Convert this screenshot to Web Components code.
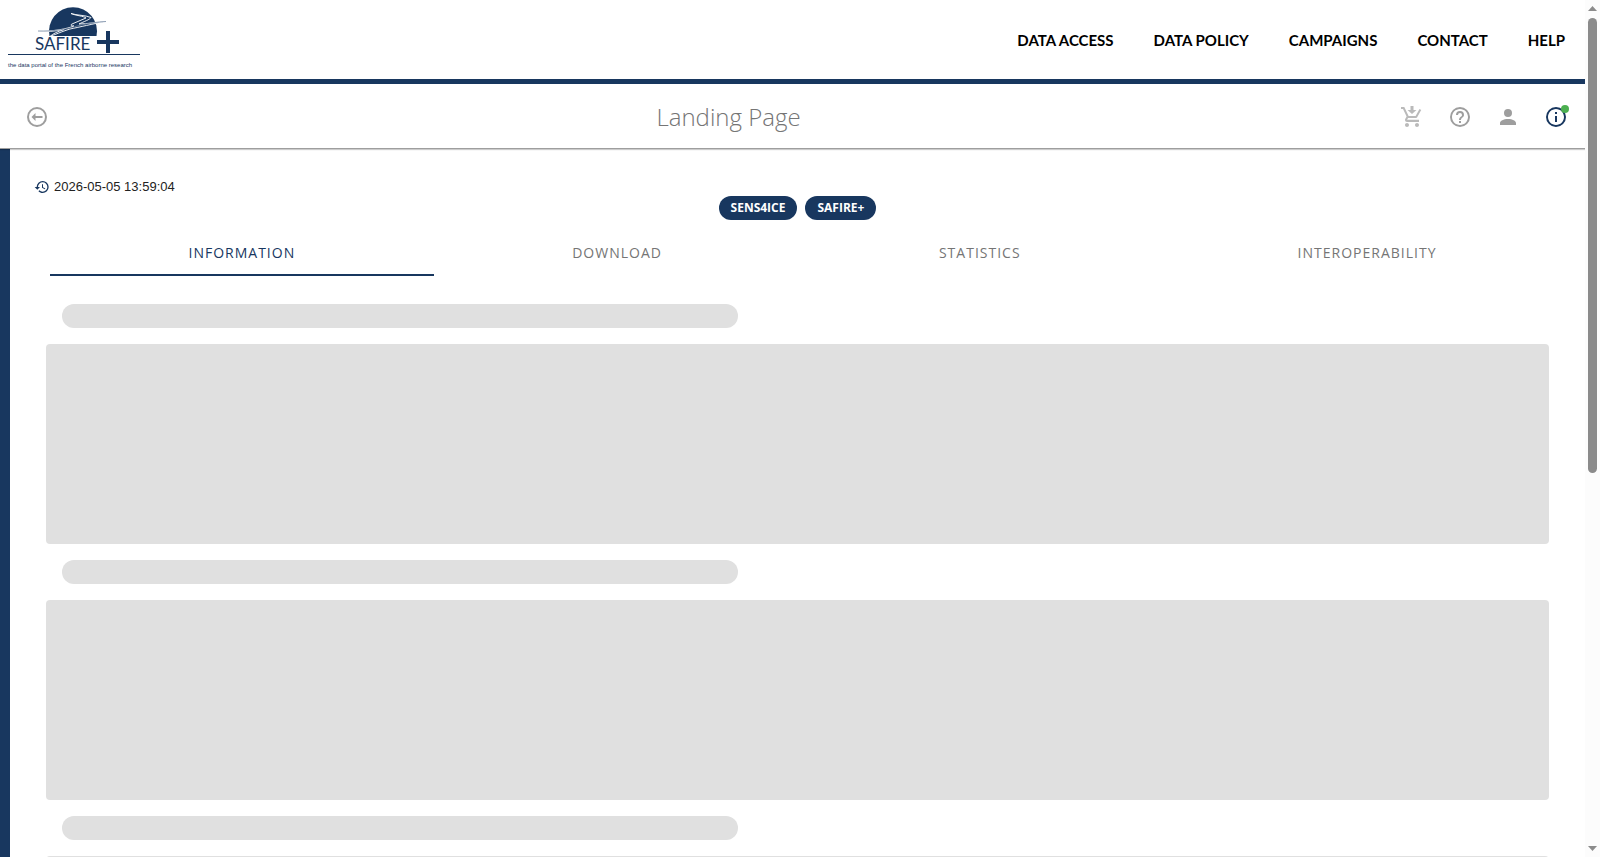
<!DOCTYPE html>
<html lang="en">
<head>
<meta charset="utf-8">
<title>Landing Page</title>
<style>
  :root { --navy: #18375f; --grey: #9e9e9e; --bone: #e0e0e0; }
  html, body { margin: 0; height: 100%; overflow: hidden; background: #fff; font-family: "Open Sans", sans-serif; }
</style>
</head>
<body>
<portal-app></portal-app>
<script>
const define = (name, html, setup) => customElements.define(name, class extends HTMLElement {
  constructor() {
    super();
    const t = document.createElement('template');
    t.innerHTML = html;
    this.attachShadow({ mode: 'open' }).append(t.content.cloneNode(true));
  }
  connectedCallback() { if (setup) setup(this, this.shadowRoot); }
});

define('portal-logo', `
<style>
  :host { display: block; }
  a, svg { display: block; }
</style>
<a href="#" aria-label="Home">
<svg width="150" height="72" viewBox="0 0 150 72" fill="#18375f">
  <path d="M49.500 36A24 24 0 1 1 96.500 36Z"/>
  <path d="M38 31C54 31.500 66 29 74 26C71 26 70 25 72 24L86 18C84 16 75 15.500 71 13.500C77 15.500 85 15 91 17.500C90 19.500 84 21.500 79 24C87 24 97 22 106 21.500C92 24 80 27 70 29C62 31.500 54 35 50 36.500C53 33.500 58 31.500 64 29.500C54 31.500 46 32 38 31Z" fill="#18375f" stroke="#fff" stroke-width="0.900"/>
  <path d="M38 31C54 31.500 68 29 79 25.500C89 23 97 22 106 21.500" fill="none" stroke="#6e84a0" stroke-width="0.800"/>
  <text x="35" y="50" font-family="Lato, sans-serif" font-size="17">SAFIRE</text>
  <path d="M106 31h4v9h9v4h-9v9h-4v-9h-9v-4h9z"/>
  <path d="M8 54h132v1H8z"/>
  <text x="8" y="67" font-family="'Liberation Sans', Arial, sans-serif" font-size="6">the data portal of the French airborne research</text>
</svg>
</a>`);

define('nav-link', `
<style>
  :host { display: block; }
  a { color: #000; text-decoration: none; font: 700 15px/20px Lato, sans-serif; white-space: nowrap; }
</style>
<a href="#"><slot></slot></a>`);

define('portal-header', `
<style>
  :host { display: flex; justify-content: space-between; align-items: center; height: 79px; border-bottom: 5px solid var(--navy); }
  portal-logo { align-self: flex-start; }
  nav { display: flex; gap: 40px; padding-right: 20px; }
</style>
<portal-logo></portal-logo>
<nav>
  <nav-link>DATA ACCESS</nav-link><nav-link>DATA POLICY</nav-link><nav-link>CAMPAIGNS</nav-link><nav-link>CONTACT</nav-link><nav-link>HELP</nav-link>
</nav>`);

const ICONS = {
  back: 'M2,12A10,10 0 0,1 12,2A10,10 0 0,1 22,12A10,10 0 0,1 12,22A10,10 0 0,1 2,12M4,12A8,8 0 0,0 12,20A8,8 0 0,0 20,12A8,8 0 0,0 12,4A8,8 0 0,0 4,12M10.500,8V11H17.500V13H10.500V16L6.500,12Z',
  cart: 'M12 9L7.500 5H10.500V1H13.500V5H16.500L12 9M7 18C5.900 18 5 18.900 5 20S5.900 22 7 22 9 21.100 9 20 8.100 18 7 18M17 18C15.900 18 15 18.900 15 20S15.900 22 17 22 19 21.100 19 20 18.100 18 17 18M7.200 14.600C7.200 14.700 7.300 14.800 7.400 14.800H19V17H7C5.900 17 5 16.100 5 15C5 14.600 5.100 14.300 5.200 14L6.600 11.600L3 4H1V2H4.300L8.600 11H15.600L19.500 4L21.200 5L17.300 12C17 12.600 16.300 13 15.500 13H8.100L7.200 14.600Z',
  help: 'M11,18H13V16H11V18M12,2A10,10 0 0,0 2,12A10,10 0 0,0 12,22A10,10 0 0,0 22,12A10,10 0 0,0 12,2M12,20C7.590,20 4,16.410 4,12C4,7.590 7.590,4 12,4C16.410,4 20,7.590 20,12C20,16.410 16.410,20 12,20M12,6A4,4 0 0,0 8,10H10A2,2 0 0,1 12,8A2,2 0 0,1 14,10C14,12 11,11.750 11,15H13C13,12.750 16,12.500 16,10A4,4 0 0,0 12,6Z',
  user: 'M12,4A4,4 0 0,1 16,8A4,4 0 0,1 12,12A4,4 0 0,1 8,8A4,4 0 0,1 12,4M12,14C16.420,14 20,15.790 20,18V20H4V18C4,15.790 7.580,14 12,14Z',
  info: 'M11,9H13V7H11M12,20C7.590,20 4,16.410 4,12C4,7.590 7.590,4 12,4C16.410,4 20,7.590 20,12C20,16.410 16.410,20 12,20M12,2A10,10 0 0,0 2,12A10,10 0 0,0 12,22A10,10 0 0,0 22,12A10,10 0 0,0 12,2M11,17H13V11H11V17Z',
  history: 'M13.500,8H12V13L16.280,15.540L17,14.330L13.500,12.250V8M13,3A9,9 0 0,0 4,12H1L4.960,16.030L9,12H6A7,7 0 0,1 13,5A7,7 0 0,1 20,12A7,7 0 0,1 13,19C11.070,19 9.320,18.210 8.060,16.940L6.640,18.360C8.270,20 10.500,21 13,21A9,9 0 0,0 22,12A9,9 0 0,0 13,3'
};
define('svg-icon', `
<style>
  :host { display: block; width: 24px; height: 24px; }
  svg { display: block; width: 100%; height: 100%; fill: currentColor; }
</style>
<svg viewBox="0 0 24 24" aria-hidden="true"><path/></svg>`,
(el, root) => root.querySelector('path').setAttribute('d', ICONS[el.getAttribute('name')]));

define('icon-button', `
<style>
  :host { display: block; color: var(--grey); }
  button { display: grid; place-items: center; position: relative; width: 48px; height: 48px; padding: 0; border: 0; background: none; color: inherit; }
  :host([badge]) button::after { content: ""; position: absolute; left: 29px; top: 12px; width: 8px; height: 8px; border-radius: 50%; background: #4caf50; }
</style>
<button type="button"><svg-icon></svg-icon></button>`,
(el, root) => {
  const icon = document.createElement('svg-icon');
  icon.setAttribute('name', el.getAttribute('icon'));
  root.querySelector('svg-icon').replaceWith(icon);
  root.querySelector('button').setAttribute('aria-label', el.getAttribute('label'));
});

define('page-toolbar', `
<style>
  :host { display: flex; align-items: center; height: 62px; padding: 2px 5px 0 13px; position: relative; box-shadow: 0 1px 0 var(--grey), 0 2px 1px #0003; background: #fff; }
  h1 { flex: 1; margin: 0; padding-left: 8px; text-align: center; font: 300 24px/32px "Open Sans", sans-serif; color: #757575; }
  div { display: flex; }
  .pale { opacity: .7; }
  .active { color: var(--navy); }
</style>
<icon-button icon="back" label="Back"></icon-button>
<h1>Landing Page</h1>
<div>
  <icon-button class="pale" icon="cart" label="Cart"></icon-button>
  <icon-button icon="help" label="Help"></icon-button>
  <icon-button icon="user" label="Account"></icon-button>
  <icon-button class="active" badge icon="info" label="Information"></icon-button>
</div>`);

define('tag-chip', `
<style>
  :host { display: block; padding: 0 12px; border-radius: 12px; background: var(--navy); color: #fff; font: 700 12px/24px "Open Sans", sans-serif; }
</style>
<slot></slot>`);

define('tab-item', `
<style>
  :host { display: flex; flex: 1 1 auto; }
  button { flex: 1; height: 48px; padding: 4px 16px 0; border: 0; border-bottom: 2px solid transparent; background: none; color: #757575; font: 500 14px/20px "Open Sans", sans-serif; letter-spacing: 1px; }
  :host([selected]) button { color: var(--navy); border-bottom-color: var(--navy); }
</style>
<button type="button" role="tab"><slot></slot></button>`,
(el, root) => root.querySelector('button').setAttribute('aria-selected', el.hasAttribute('selected')));

define('skeleton-card', `
<style>
  :host { display: block; }
  .heading { width: 45%; height: 24px; margin: 0 16px 16px; border-radius: 12px; background: var(--bone); }
  .body { height: 200px; border-radius: 4px; background: var(--bone); }
</style>
<div class="heading"></div><div class="body"></div>`);

define('page-content', `
<style>
  :host { display: block; border-left: 10px solid var(--navy); padding-top: 29px; }
  .date { display: flex; align-items: center; gap: 4px; height: 19px; padding-left: 24px; font: 13px/19px "Liberation Sans", Arial, sans-serif; color: #222; }
  .date svg-icon { width: 16px; height: 16px; color: var(--navy); }
  .chips { display: flex; justify-content: center; gap: 8px; height: 32px; }
  .chips tag-chip { height: 24px; }
  .tabs { display: flex; padding: 0 10px 0 40px; }
  .cards { display: grid; gap: 16px; padding: 28px 36px 0; }
</style>
<div class="date"><svg-icon name="history"></svg-icon><time datetime="2026-05-05T13:59:04">2026-05-05 13:59:04</time></div>
<div class="chips"><tag-chip>SENS4ICE</tag-chip><tag-chip>SAFIRE+</tag-chip></div>
<div class="tabs" role="tablist">
  <tab-item selected>INFORMATION</tab-item><tab-item>DOWNLOAD</tab-item><tab-item>STATISTICS</tab-item><tab-item>INTEROPERABILITY</tab-item>
</div>
<div class="cards"><skeleton-card></skeleton-card><skeleton-card></skeleton-card><skeleton-card></skeleton-card></div>`);

define('scroll-rail', `
<style>
  :host { display: flex; flex-direction: column; align-items: center; background: #fcfcfc; padding: 6px 0; box-sizing: border-box; }
  svg { display: block; fill: #8b8b8b; }
  .track { flex: 1; width: 9px; margin: 7px 0; }
  .thumb { height: calc(56% - 5px); border-radius: 5px; background: #8b8b8b; }
</style>
<svg width="9" height="5"><path d="M0 5L4.500 0L9 5Z"/></svg>
<div class="track"><div class="thumb"></div></div>
<svg width="9" height="5"><path d="M0 0L4.500 5L9 0Z"/></svg>`);

define('portal-app', `
<style>
  :host { display: grid; grid-template-columns: 1fr 15px; height: 100vh; overflow: hidden; }
  main { display: flex; flex-direction: column; min-width: 0; overflow: hidden; }
  main > * { flex-shrink: 0; }
</style>
<main><portal-header></portal-header><page-toolbar></page-toolbar><page-content></page-content></main>
<scroll-rail></scroll-rail>`);
</script>
</body>
</html>
